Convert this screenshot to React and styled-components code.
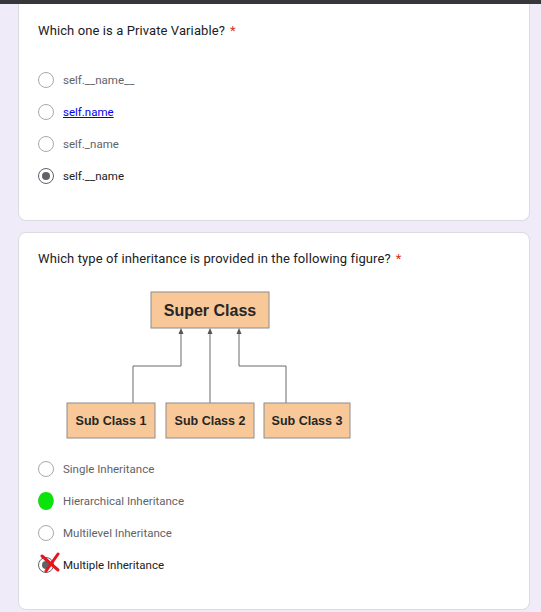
import styled, { createGlobalStyle } from 'styled-components';

const GlobalStyle = createGlobalStyle`
  html, body {
    margin: 0;
    padding: 0;
    background: #f0ebf8;
    font-family: Roboto, "Liberation Sans", Arial, sans-serif;
  }
`;

const firstQuestion = {
  title: 'Which one is a Private Variable?',
  options: [
    { label: 'self.__name__' },
    { label: 'self.name', link: true },
    { label: 'self._name' },
    { label: 'self.__name', checked: true },
  ],
};

const secondOptions = [
  { label: 'Single Inheritance' },
  { label: 'Hierarchical Inheritance', mark: 'green' },
  { label: 'Multilevel Inheritance' },
  { label: 'Multiple Inheritance', checked: true, mark: 'cross' },
];

export default function App() {
  return (
    <Page>
      <GlobalStyle />
      <TopBar />
      <Cards>
        <Card $cut>
          <Title>
            {firstQuestion.title}
            <Required>*</Required>
          </Title>
          <Options>
            {firstQuestion.options.map((o) => (
              <Option key={o.label} {...o} />
            ))}
          </Options>
        </Card>
        <Card>
          <Title>
            Which type of inheritance is provided in the following figure?
            <Required>*</Required>
          </Title>
          <Figure />
          <Options>
            {secondOptions.map((o) => (
              <Option key={o.label} {...o} />
            ))}
          </Options>
        </Card>
      </Cards>
    </Page>
  );
}

function Option({ label, checked, link, mark }) {
  return (
    <OptionRow>
      <RadioWrap>
        <Radio $checked={checked} />
        {mark === 'green' && <GreenMark />}
        {mark === 'cross' && <CrossMark />}
      </RadioWrap>
      {link ? (
        <OptionLink href="#">{label}</OptionLink>
      ) : (
        <OptionLabel $checked={checked}>{label}</OptionLabel>
      )}
    </OptionRow>
  );
}

function GreenMark() {
  return (
    <Mark width="20" height="22" viewBox="0 0 20 22" style={{ left: -1, top: -3 }}>
      <path
        d="M3 5 C5 1, 13 1, 15 5 C17 9, 17 16, 13 19 C9 21, 4 20, 2 15 C1 11, 1 8, 3 5 Z"
        fill="#0be40b"
      />
    </Mark>
  );
}

function CrossMark() {
  return (
    <Mark width="24" height="22" viewBox="0 0 24 22" style={{ left: 1, top: -5 }}>
      <path d="M3 4 L19 18" stroke="#e8141b" strokeWidth="3" strokeLinecap="round" fill="none" />
      <path d="M19 2 L7 19" stroke="#e8141b" strokeWidth="3" strokeLinecap="round" fill="none" />
    </Mark>
  );
}

function Figure() {
  // drawn in page coordinates shifted by the figure origin (38, 285)
  const ox = 38;
  const oy = 285;
  const box = (x1, y1, x2, y2) => ({ x: x1 - ox, y: y1 - oy, width: x2 - x1, height: y2 - y1 });
  const subs = [
    { label: 'Sub Class 1', x1: 67, x2: 155 },
    { label: 'Sub Class 2', x1: 166, x2: 254 },
    { label: 'Sub Class 3', x1: 264, x2: 350 },
  ];
  const p = (pts) => pts.map(([x, y]) => `${x - ox},${y - oy}`).join(' ');
  const arrow = (x) => p([[x, 328], [x - 2.5, 334], [x + 2.5, 334]]);
  return (
    <FigureSvg width="320" height="155" viewBox="0 0 320 155">
      <rect {...box(151, 292, 269, 328)} fill="#f9c898" stroke="#8c8c8c" />
      <FigureText x={210 - ox} y={316 - oy} fontSize="16">
        Super Class
      </FigureText>
      <polyline points={p([[133, 403], [133, 366], [181, 366], [181, 331]])} fill="none" stroke="#6a6a6a" />
      <polyline points={p([[210, 403], [210, 331]])} fill="none" stroke="#6a6a6a" />
      <polyline points={p([[286, 403], [286, 366], [239, 366], [239, 331]])} fill="none" stroke="#6a6a6a" />
      <polygon points={arrow(181)} fill="#555" />
      <polygon points={arrow(210)} fill="#555" />
      <polygon points={arrow(239)} fill="#555" />
      {subs.map((s) => (
        <g key={s.label}>
          <rect {...box(s.x1, 403, s.x2, 438)} fill="#f9c898" stroke="#8c8c8c" />
          <FigureText x={(s.x1 + s.x2) / 2 - ox} y={425 - oy} fontSize="12.5">
            {s.label}
          </FigureText>
        </g>
      ))}
    </FigureSvg>
  );
}

const Page = styled.div`
  min-height: 612px;
  background: #f0ebf8;
`;

const TopBar = styled.div`
  height: 4px;
  background: #36373b;
`;

const Cards = styled.div`
  display: flex;
  flex-direction: column;
  gap: 11px;
  padding: 0 11px 0 18px;
`;

const Card = styled.div`
  background: #fff;
  border: 1px solid #dadce0;
  border-radius: 8px;
  padding: 17px 19px 28px;
  ${(p) =>
    p.$cut &&
    `
    border-top: none;
    border-top-left-radius: 0;
    border-top-right-radius: 0;
    padding-top: 18px;
  `}
`;

const Title = styled.div`
  font-size: 13px;
  line-height: 18px;
  color: #202124;
  letter-spacing: 0.1px;
`;

const Required = styled.span`
  color: #d93025;
  margin-left: 5px;
`;

const Options = styled.div`
  display: flex;
  flex-direction: column;
  margin-top: 24px;
`;

const OptionRow = styled.div`
  height: 32px;
  display: flex;
  align-items: center;
  gap: 9px;
`;

const RadioWrap = styled.div`
  position: relative;
  width: 16px;
  height: 16px;
  flex: none;
`;

const Radio = styled.div`
  box-sizing: border-box;
  width: 16px;
  height: 16px;
  border-radius: 50%;
  border: 1.5px solid ${(p) => (p.$checked ? '#5f6368' : '#a6a9ad')};
  display: flex;
  align-items: center;
  justify-content: center;
  &::after {
    content: '';
    display: ${(p) => (p.$checked ? 'block' : 'none')};
    width: 8px;
    height: 8px;
    border-radius: 50%;
    background: #5f6368;
  }
`;

const Mark = styled.svg`
  position: absolute;
`;

const OptionLabel = styled.span`
  font-size: 11.5px;
  color: ${(p) => (p.$checked ? '#202124' : '#5f6368')};
`;

const OptionLink = styled.a`
  font-size: 11.5px;
  color: #0000ee;
  text-decoration: underline;
`;

const FigureSvg = styled.svg`
  display: block;
  margin-top: 17px;
  margin-bottom: -11px;
`;

const FigureText = styled.text`
  font-family: "Liberation Sans", Arial, sans-serif;
  font-weight: bold;
  fill: #262626;
  text-anchor: middle;
`;
